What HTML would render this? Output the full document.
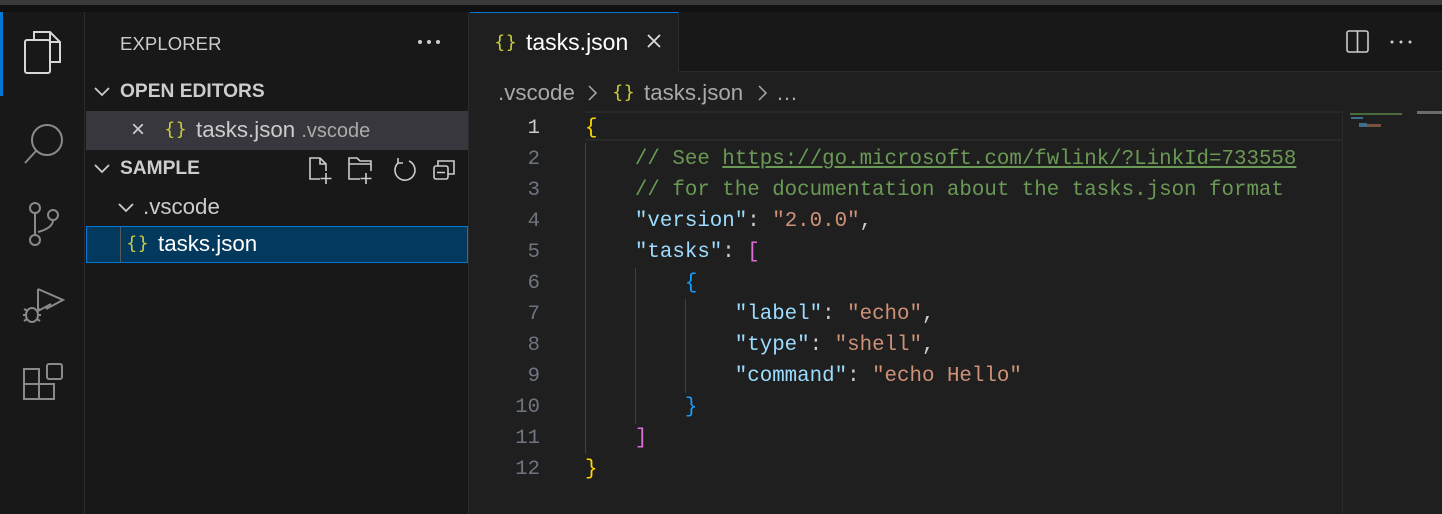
<!DOCTYPE html>
<html><head><style>
*{margin:0;padding:0;box-sizing:border-box}
body{width:1442px;height:514px;background:#1f1f1f;overflow:hidden;position:relative;font-family:"Liberation Sans",sans-serif;color:#ccc}
.abs{position:absolute}
.mono{font-family:"Liberation Mono","DejaVu Sans Mono",monospace;font-size:20.8px;white-space:pre}
.ln{position:absolute;left:490px;width:50px;text-align:right;color:#6e7681;font-family:"Liberation Mono",monospace;font-size:20.6px;height:31.1px;line-height:31.1px}
.cl{position:absolute;left:585px;height:31.1px;line-height:31.1px}
.k{color:#9cdcfe}.s{color:#ce9178}.c{color:#6a9955}.y{color:#ffd700}.p{color:#da70d6}.b{color:#179fff}.w{color:#ccc}
.br{color:#cbcb41;font-family:"DejaVu Sans",sans-serif;letter-spacing:0}
</style></head><body>
<div class="abs" style="left:0;top:0;width:1442px;height:5px;background:#3a3a3a"></div>
<div class="abs" style="left:0;top:5px;width:1442px;height:7px;background:#111"></div>
<div class="abs" style="left:0;top:12px;width:85px;height:502px;background:#181818;border-right:1px solid #2b2b2b"></div>
<div class="abs" style="left:0;top:12px;width:3px;height:84px;background:#0078d4"></div>
<svg class="abs" style="left:0;top:12px" width="85" height="460" fill="none" stroke-width="2">
<g stroke="#d7d7d7"><path d="M34 28 V20 H50 L60 30 V50 H50"/><path d="M50 20 V30 H60"/><rect x="25" y="28" width="25" height="33" rx="2"/></g>
<g stroke="#8a8a8a"><circle cx="47" cy="128" r="15"/><path d="M36 139 L25 151"/>
<circle cx="35" cy="196" r="5"/><circle cx="35" cy="228" r="5"/><circle cx="53" cy="203" r="5"/><path d="M35 201 V223 M53 208 Q53 216 38 220"/>
<path d="M38 277 V299 L51 292 M38 277 L63 288 L46 297"/><ellipse cx="32" cy="303" rx="6" ry="7"/><path d="M24 297 L28 299 M24 309 L27 307 M40 297 L36 299 M40 309 L37 307 M23 303 H26 M38 303 H41"/>
<rect x="24" y="372" width="15" height="15"/><rect x="39" y="372" width="15" height="15" /><rect x="24" y="357" width="15" height="15"/><rect x="47" y="352" width="15" height="15" rx="2"/></g>
</svg>
<div class="abs" style="left:85px;top:12px;width:384px;height:502px;background:#181818;border-right:1px solid #2b2b2b"></div>
<div class="abs" style="left:120px;top:33px;font-size:18.5px;color:#ccc;letter-spacing:.1px">EXPLORER</div>
<svg class="abs" style="left:416px;top:38px" width="28" height="8" fill="#ccc"><circle cx="4" cy="4" r="2"/><circle cx="13" cy="4" r="2"/><circle cx="22" cy="4" r="2"/></svg>
<svg class="abs" style="left:94px;top:86px" width="16" height="100" fill="none" stroke="#ccc" stroke-width="1.8"><path d="M1 2 L8 9 L15 2"/><path d="M1 79 L8 86 L15 79"/></svg>
<div class="abs" style="left:120px;top:81px;font-size:19.2px;font-weight:bold;color:#ccc">OPEN EDITORS</div>
<div class="abs" style="left:86px;top:111px;width:382px;height:39px;background:#37373d"></div>
<div class="abs" style="left:131px;top:116px;font-size:24px;color:#ccc">×</div>
<div class="abs br" style="left:164px;top:119px;font-size:18px">{}</div>
<div class="abs" style="left:196px;top:117px;font-size:22.3px;color:#ccc">tasks.json <span style="font-size:20px;color:#aaa">.vscode</span></div>
<div class="abs" style="left:120px;top:158px;font-size:19.2px;font-weight:bold;color:#ccc">SAMPLE</div>
<svg class="abs" style="left:305px;top:153px" width="160" height="32" fill="none" stroke="#ccc" stroke-width="1.6">
<path d="M15 26 H5 V5 H15 L21 11 V18 M15 5 V11 H21 M21 20 V31 M15.5 25.5 H26.5"/>
<path d="M55 26 H44 V5 H52 L55 8 H66 V18 M44 11 H66 M61 20 V31 M55.5 25.5 H66.5"/>
<path d="M104 8 A10 10 0 1 1 93 10 M93 5 V10 H98"/>
<rect x="129" y="13" width="14" height="13" rx="2"/><path d="M133 13 V8 H149 V21 H143 M132 19.5 H140"/>
</svg>
<svg class="abs" style="left:118px;top:200px" width="16" height="16" fill="none" stroke="#ccc" stroke-width="1.8"><path d="M1 4 L8 11 L15 4"/></svg>
<div class="abs" style="left:143px;top:194px;font-size:22.3px;color:#ccc">.vscode</div>
<div class="abs" style="left:86px;top:226px;width:382px;height:37px;background:#04395e;border:1px solid #0078d4"></div>
<div class="abs" style="left:120px;top:227px;width:1px;height:35px;background:#585858"></div>
<div class="abs br" style="left:126px;top:233px;font-size:18px">{}</div>
<div class="abs" style="left:158px;top:231px;font-size:22.3px;color:#fff">tasks.json</div>
<div class="abs" style="left:470px;top:12px;width:972px;height:60px;background:#181818;border-bottom:1px solid #2b2b2b"></div>
<div class="abs" style="left:470px;top:12px;width:209px;height:60px;background:#1f1f1f;border-top:1px solid #0078d4;border-right:1px solid #2b2b2b"></div>
<div class="abs br" style="left:494px;top:32px;font-size:18px">{}</div>
<div class="abs" style="left:526px;top:29px;font-size:23px;color:#fff">tasks.json</div>
<svg class="abs" style="left:646px;top:33px" width="16" height="16" stroke="#ddd" stroke-width="1.8"><path d="M2 2 L14 14 M14 2 L2 14"/></svg>
<svg class="abs" style="left:1345px;top:30px" width="80" height="24" fill="none" stroke="#ccc" stroke-width="1.6"><rect x="2" y="1" width="21" height="21" rx="2"/><path d="M12.5 1 V22"/><circle cx="47" cy="12" r="1.5" fill="#ccc" stroke="none"/><circle cx="56" cy="12" r="1.5" fill="#ccc" stroke="none"/><circle cx="65" cy="12" r="1.5" fill="#ccc" stroke="none"/></svg>
<div class="abs" style="left:498px;top:80px;font-size:22.3px;color:#a9a9a9;white-space:pre">.vscode</div>
<svg class="abs" style="left:587px;top:84px" width="200" height="18" fill="none" stroke="#aaa" stroke-width="1.5"><path d="M2 2 L9 9 L2 16"/><path d="M172 2 L179 9 L172 16"/></svg>
<div class="abs br" style="left:612px;top:82px;font-size:18px">{}</div>
<div class="abs" style="left:644px;top:80px;font-size:22.3px;color:#a9a9a9">tasks.json</div>
<div class="abs" style="left:776px;top:80px;font-size:22px;color:#a9a9a9">…</div>
<div class="abs" style="left:585px;top:111px;width:757px;height:30px;border-top:2px solid #282828;border-bottom:2px solid #282828"></div>
<div class="abs" style="left:1342px;top:111px;width:1px;height:403px;background:#2a2a2a"></div>
<div class="abs" style="left:1417px;top:111px;width:25px;height:3px;background:#6b6b6b"></div>
<div class="abs" style="left:1350px;top:113px;width:52px;height:2px;background:#4a6b3a"></div>
<div class="abs" style="left:1351px;top:117px;width:12px;height:2px;background:#3f6f8c"></div>
<div class="abs" style="left:1359px;top:123px;width:8px;height:4px;background:#3f6f8c"></div>
<div class="abs" style="left:1367px;top:124px;width:14px;height:3px;background:#7a5040"></div>
<div class="abs" style="left:585px;top:143px;width:1px;height:311px;background:#404040"></div>
<div class="abs" style="left:635px;top:268px;width:1px;height:156px;background:#404040"></div>
<div class="abs" style="left:685px;top:299px;width:1px;height:94px;background:#404040"></div>
<div class="mono" style="position:absolute;left:0;top:2px;width:1442px">
<div class="ln" style="top:111px;color:#ccc">1</div><div class="ln" style="top:142px">2</div><div class="ln" style="top:173px">3</div><div class="ln" style="top:204px">4</div><div class="ln" style="top:235px">5</div><div class="ln" style="top:266px">6</div><div class="ln" style="top:297px">7</div><div class="ln" style="top:328px">8</div><div class="ln" style="top:359px">9</div><div class="ln" style="top:390px">10</div><div class="ln" style="top:421px">11</div><div class="ln" style="top:452px">12</div>
<div class="cl" style="top:111px"><span class="y">{</span></div>
<div class="cl c" style="top:142px">    // See <u>https://go.microsoft.com/fwlink/?LinkId=733558</u></div>
<div class="cl c" style="top:173px">    // for the documentation about the tasks.json format</div>
<div class="cl" style="top:204px">    <span class="k">"version"</span><span class="w">: </span><span class="s">"2.0.0"</span><span class="w">,</span></div>
<div class="cl" style="top:235px">    <span class="k">"tasks"</span><span class="w">: </span><span class="p">[</span></div>
<div class="cl" style="top:266px">        <span class="b">{</span></div>
<div class="cl" style="top:297px">            <span class="k">"label"</span><span class="w">: </span><span class="s">"echo"</span><span class="w">,</span></div>
<div class="cl" style="top:328px">            <span class="k">"type"</span><span class="w">: </span><span class="s">"shell"</span><span class="w">,</span></div>
<div class="cl" style="top:359px">            <span class="k">"command"</span><span class="w">: </span><span class="s">"echo Hello"</span></div>
<div class="cl" style="top:390px">        <span class="b">}</span></div>
<div class="cl" style="top:421px">    <span class="p">]</span></div>
<div class="cl" style="top:452px"><span class="y">}</span></div>
</div>
</body></html>
